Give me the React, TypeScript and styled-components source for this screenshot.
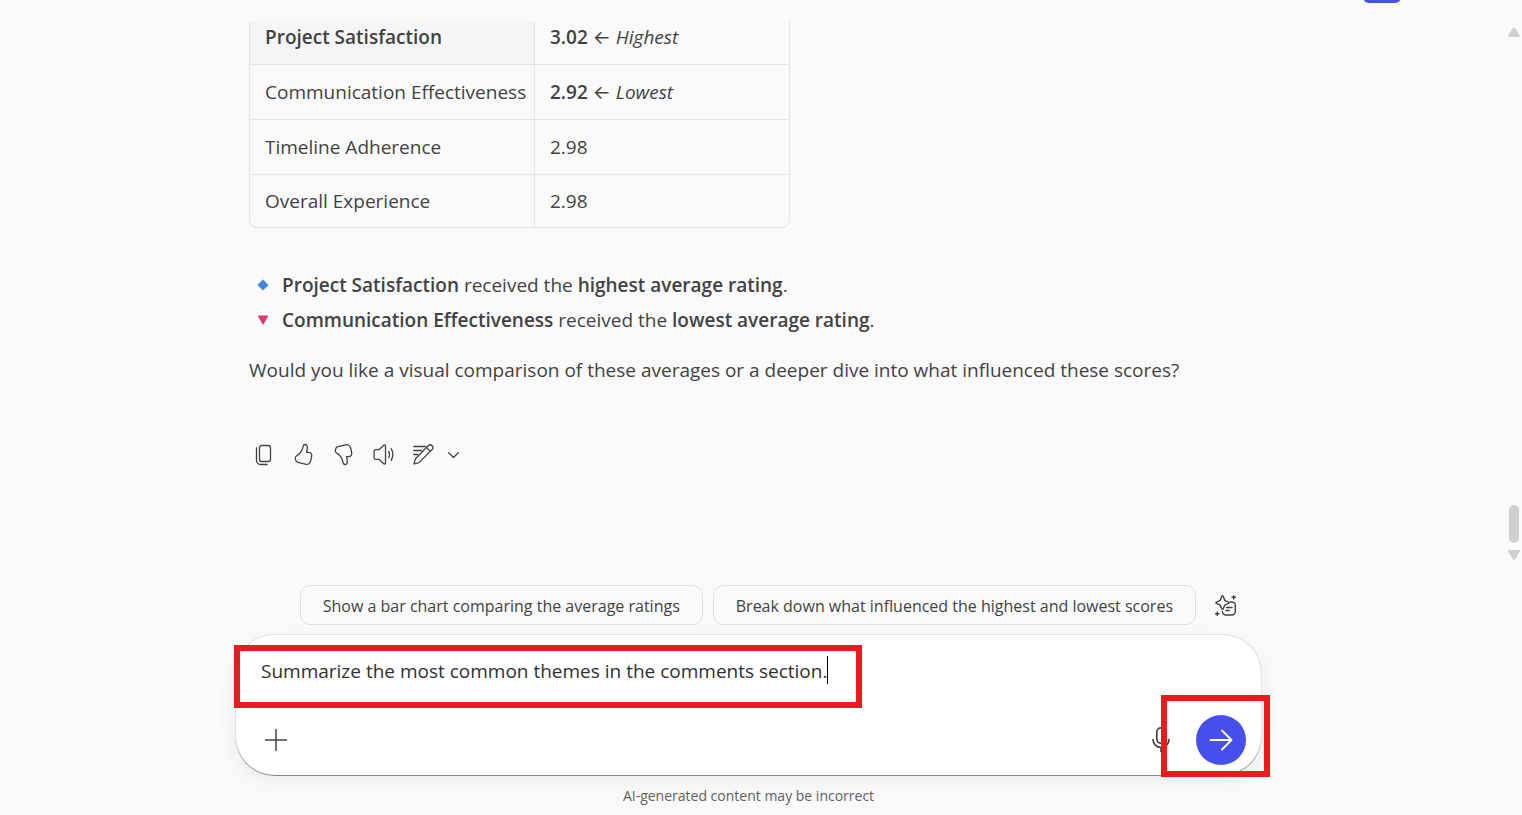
import React, { useState } from "react";
import styled, { createGlobalStyle } from "styled-components";

const GlobalStyle = createGlobalStyle`
  *, *::before, *::after { box-sizing: border-box; }
  body {
    margin: 0;
    background: #fafafa;
    color: #424242;
    font-family: "Segoe UI", "Open Sans", "Noto Sans", sans-serif;
    font-size: 19px;
    line-height: 35px;
  }
  button, input { font: inherit; color: inherit; }
`;

const Page = styled.div`
  display: flex;
  flex-direction: column;
  height: 100vh;
  min-height: 600px;
  overflow: hidden;
`;

const TopBar = styled.header`
  display: flex;
  justify-content: flex-end;
  flex: none;
  height: 21px;
  padding-right: 121px;
  overflow: hidden;
`;

const TopButton = styled.button`
  width: 38px;
  height: 32px;
  margin-top: -29px;
  padding: 0;
  border: 0;
  border-radius: 6px;
  background: #464feb;
`;

const ThreadRow = styled.div`
  display: flex;
  flex: 1;
  min-height: 0;
`;

const Thread = styled.main`
  display: flex;
  flex: 1;
  flex-direction: column;
  justify-content: flex-end;
  align-items: center;
  min-width: 0;
  overflow: hidden;
`;

const Message = styled.article`
  width: 100%;
  max-width: 1027px;
  padding: 0 14px 90px;
`;

const TableFrame = styled.div`
  width: 541px;
  max-width: 100%;
  border: 1px solid #e5e5e5;
  border-radius: 8px;
  overflow: hidden;
`;

const ScoreTable = styled.table`
  width: 100%;
  border-collapse: separate;
  border-spacing: 0;
  table-layout: fixed;

  th, td {
    height: 55px;
    padding: 0 0 0 15px;
    border-bottom: 1px solid #e5e5e5;
    font-weight: 400;
    text-align: left;
    white-space: nowrap;
  }
  th {
    width: 285px;
    border-right: 1px solid #e5e5e5;
  }
  tr:last-child > * {
    height: 52px;
    border-bottom: 0;
  }
`;

const MetricCell = styled.th<{ $lead?: boolean }>`
  && {
    background: ${(p) => (p.$lead ? "#f5f5f5" : "transparent")};
    font-weight: ${(p) => (p.$lead ? 600 : 400)};
  }
`;

const Strong = styled.strong`
  font-weight: 600;
`;

const Arrow = styled.span`
  font-family: Inter, sans-serif;
`;

const Findings = styled.ul`
  margin: 40px 0 15px;
  padding: 0;
  list-style: none;
`;

const Finding = styled.li`
  display: grid;
  grid-template-columns: 28px 1fr;
  column-gap: 5px;
  align-items: center;

  svg { justify-self: center; }
`;

const Paragraph = styled.p`
  margin: 0;
`;

const Actions = styled.div`
  display: flex;
  margin: 47px 0 0 -6px;
`;

const IconButton = styled.button<{ $width?: number }>`
  display: flex;
  flex: none;
  align-items: center;
  justify-content: center;
  width: ${(p) => p.$width ?? 40}px;
  height: 40px;
  padding: 0;
  border: 0;
  background: none;
  cursor: pointer;
`;

const ScrollRail = styled.div`
  display: flex;
  flex: none;
  flex-direction: column;
  align-items: center;
  width: 25px;
  padding: 6px 0 5px 9px;
`;

const ScrollThumb = styled.div`
  width: 10px;
  height: 38px;
  margin: auto 0 7px;
  border-radius: 5px;
  background: #cfcfcf;
`;

const Footer = styled.footer`
  display: flex;
  flex: none;
  flex-direction: column;
  align-items: center;
  padding: 20px 25px 0 0;
`;

const Suggestions = styled.div`
  display: flex;
  justify-content: flex-end;
  gap: 10px;
  width: 100%;
  max-width: 1027px;
  padding-right: 16px;
`;

const Suggestion = styled.button`
  height: 40px;
  padding: 1px 22px 0;
  border: 1px solid #e0e0e0;
  border-radius: 10px;
  background: #fafafa;
  font-size: 16px;
  line-height: 24px;
  white-space: nowrap;
  cursor: pointer;
`;

const Composer = styled.form`
  position: relative;
  width: 100%;
  max-width: 1027px;
  margin-top: 9px;
  padding: 22px 16px 10px 26px;
  border-radius: 40px;
  background: #fff;
  box-shadow:
    inset 0 1px 0 #e3e3e3,
    inset 1px 0 0 #e3e3e3,
    inset -1px 0 0 #e3e3e3,
    0 1px 0 #858585,
    0 6px 20px rgba(40, 60, 90, 0.08);
`;

const PromptRow = styled.div`
  display: flex;
`;

const PromptInput = styled.input`
  field-sizing: content;
  height: 28px;
  padding: 2px 0 0;
  border: 0;
  outline: 0;
  background: none;
  color: #303030;
  line-height: 26px;
`;

const Caret = styled.span`
  width: 1px;
  background: #000;
`;

const Toolbar = styled.div`
  display: flex;
  align-items: center;
  margin: 31px 0 0 -5px;
`;

const SendButton = styled.button`
  display: flex;
  align-items: center;
  justify-content: center;
  width: 50px;
  height: 50px;
  margin-left: 15px;
  padding: 0;
  border: 0;
  border-radius: 50%;
  background: #464feb;
  cursor: pointer;
`;

const Spacer = styled.span`
  flex: 1;
`;

const Highlight = styled.div`
  position: absolute;
  border: 6px solid #e81c1c;
  pointer-events: none;
`;

const PromptHighlight = styled(Highlight)`
  top: 11px;
  left: -1px;
  width: 628px;
  height: 63px;
`;

const SendHighlight = styled(Highlight)`
  right: -8px;
  bottom: -2px;
  width: 109px;
  height: 82px;
`;

const Disclaimer = styled.p`
  margin: 11px 0 9px;
  color: #616161;
  font-size: 14px;
  line-height: 20px;
`;

type IconProps = {
  size?: number;
  stroke?: number;
  color?: string;
  children: React.ReactNode;
};

const Icon = ({ size = 24, stroke = 1.3, color = "#424242", children }: IconProps) => (
  <svg
    width={size}
    height={size}
    viewBox={`0 0 ${size} ${size}`}
    fill="none"
    stroke={color}
    strokeWidth={stroke}
    strokeLinecap="round"
    strokeLinejoin="round"
    aria-hidden="true"
  >
    {children}
  </svg>
);

const thumbPath =
  "M13.6 2c1.5 0 2.3 1.400 2.200 3.200-.1 1.700-.4 3-.8 4.600h2c2.200 0 3.500 1.500 3.200 3.600l-.9 4.800c-.5 2.700-2.800 4.200-5.500 3.500l-7.400-1.900c-1.300-.4-2-1.200-2.300-2.500l-.3-1.400c-.2-1.200.4-2 1.400-2.600 2.700-1.400 4.100-2.900 5.300-5.700.6-1.400.9-2.500 1.200-3.900.2-1.100.8-1.700 1.900-1.700Z";

const scores = [
  { metric: "Project Satisfaction", value: "3.02", note: "Highest" },
  { metric: "Communication Effectiveness", value: "2.92", note: "Lowest" },
  { metric: "Timeline Adherence", value: "2.98" },
  { metric: "Overall Experience", value: "2.98" },
];

const suggestions = [
  "Show a bar chart comparing the average ratings",
  "Break down what influenced the highest and lowest scores",
];

export default function App() {
  const [prompt, setPrompt] = useState(
    "Summarize the most common themes in the comments section."
  );

  return (
    <Page>
      <GlobalStyle />
      <TopBar>
        <TopButton type="button" aria-label="New chat" />
      </TopBar>

      <ThreadRow>
        <Thread>
          <Message>
            <TableFrame>
              <ScoreTable>
                <tbody>
                  {scores.map((row, i) => (
                    <tr key={row.metric}>
                      <MetricCell scope="row" $lead={i === 0}>
                        {row.metric}
                      </MetricCell>
                      <td>
                        {row.note ? (
                          <>
                            <Strong>{row.value}</Strong> <Arrow>←</Arrow> <em>{row.note}</em>
                          </>
                        ) : (
                          row.value
                        )}
                      </td>
                    </tr>
                  ))}
                </tbody>
              </ScoreTable>
            </TableFrame>

            <Findings>
              <Finding>
                <svg width="12" height="14" viewBox="0 0 12 14" aria-hidden="true">
                  <path d="M6 .7 11.300 6 6 11.300.700 6Z" fill="#3f87dc" stroke="#3f87dc" strokeWidth=".5" strokeLinejoin="round" />
                </svg>
                <span>
                  <Strong>Project Satisfaction</Strong> received the{" "}
                  <Strong>highest average rating</Strong>.
                </span>
              </Finding>
              <Finding>
                <svg width="12" height="14" viewBox="0 0 12 14" aria-hidden="true">
                  <path d="M1.300 1.500h9.400q.7 0 .3.700L6.500 10.300q-.5.700-1 0L1 2.200q-.4-.7.300-.7Z" fill="#e0356b" />
                </svg>
                <span>
                  <Strong>Communication Effectiveness</Strong> received the{" "}
                  <Strong>lowest average rating</Strong>.
                </span>
              </Finding>
            </Findings>

            <Paragraph>
              Would you like a visual comparison of these averages or a deeper dive into what
              influenced these scores?
            </Paragraph>

            <Actions>
              <IconButton type="button" aria-label="Copy">
                <Icon>
                  <rect x="8.500" y="2.500" width="11" height="16" rx="2.300" />
                  <path d="M5.500 5v12.500a4 4 0 0 0 4 4h6.600" />
                </Icon>
              </IconButton>
              <IconButton type="button" aria-label="Like">
                <Icon>
                  <path d={thumbPath} transform="translate(.5 -.5)" />
                </Icon>
              </IconButton>
              <IconButton type="button" aria-label="Dislike">
                <Icon>
                  <path d={thumbPath} transform="matrix(1 0 0 -1 .5 23.500)" />
                </Icon>
              </IconButton>
              <IconButton type="button" aria-label="Read aloud">
                <Icon>
                  <g transform="translate(.5 -.5)">
                    <path d="M14 3.600v16.800c0 1-1.100 1.400-1.800.8l-4.700-4.400H4.200c-.9 0-1.600-.7-1.600-1.600V8.800c0-.9.700-1.600 1.600-1.600h3.300l4.700-4.400c.7-.6 1.800-.2 1.800.8Z" />
                    <path d="M17.200 8.700c1.100 2.100 1.100 4.500 0 6.600M19.600 6.200c2.200 3.600 2.200 8 0 11.600" />
                  </g>
                </Icon>
              </IconButton>
              <IconButton type="button" aria-label="Edit in pages">
                <Icon>
                  <g transform="translate(.5 -.5)">
                    <path d="M2.200 4h12M2.200 8h8M2.200 12h4" />
                    <path d="M16.700 3.200c1-1 2.800-1.100 3.900 0s1.100 2.800 0 3.900L8.200 19.400c-.4.400-.9.700-1.500.9l-4.200 1.200 1.100-4.300c.2-.6.500-1.100.9-1.500ZM15 5l3.900 3.900" />
                  </g>
                </Icon>
              </IconButton>
              <IconButton type="button" aria-label="More options" $width={20}>
                <Icon size={12}>
                  <path d="m1.700 3.700 4.800 4.800 4.800-4.800" />
                </Icon>
              </IconButton>
            </Actions>
          </Message>
        </Thread>

        <ScrollRail aria-hidden="true">
          <svg width="12" height="10" viewBox="0 0 12 10">
            <path d="M5 .8q1-1.300 2 0l4.700 7.400q.7 1.800-1 1.800H1.300q-1.700 0-1-1.800Z" fill="#cfcfcf" />
          </svg>
          <ScrollThumb />
          <svg width="12" height="10" viewBox="0 0 12 10">
            <path d="M5 9.200q1 1.300 2 0l4.700-7.400q.7-1.800-1-1.800H1.300q-1.700 0-1 1.800Z" fill="#cfcfcf" />
          </svg>
        </ScrollRail>
      </ThreadRow>

      <Footer>
        <Suggestions>
          {suggestions.map((s) => (
            <Suggestion key={s} type="button" onClick={() => setPrompt(s)}>
              {s}
            </Suggestion>
          ))}
          <IconButton type="button" aria-label="View prompts">
            <Icon stroke={1.4}>
              <path d="M7.800 3.300q.7-1 1.400 0l1.300 3.300q.4.900 1.200 1.300l2.900 1.200q.9.600 0 1.300l-2.900 1.200q-.8.400-1.200 1.300l-1.300 2.900q-.7 1-1.400 0l-1.300-2.900q-.4-.9-1.200-1.300L2.400 10.400q-.9-.7 0-1.300l2.900-1.200q.8-.4 1.200-1.300Z" />
              <path d="M16 9h1.800a3.500 3.500 0 0 1 3.500 3.500v6a3.500 3.500 0 0 1-3.500 3.500h-6A3.500 3.500 0 0 1 8.300 18.500M12.500 14.500h5.500M12 17.500h3.300" />
              <path d="M19.700 2.600v3.400M18 4.300h3.400M3.300 19v3.400M1.600 20.700h3.400" />
            </Icon>
          </IconButton>
        </Suggestions>

        <Composer onSubmit={(e) => e.preventDefault()}>
          <PromptRow>
            <PromptInput
              aria-label="Message Copilot"
              value={prompt}
              onChange={(e) => setPrompt(e.target.value)}
            />
            <Caret aria-hidden="true" />
          </PromptRow>
          <Toolbar>
            <IconButton type="button" aria-label="Add content">
              <Icon size={24} stroke={1.500}>
                <path d="M12 1.500v21M1.500 12h21" />
              </Icon>
            </IconButton>
            <Spacer />
            <IconButton type="button" aria-label="Use microphone">
              <Icon size={28} stroke={1.700}>
                <rect x="9.800" y="1.800" width="8.400" height="15.500" rx="4.200" />
                <path d="M6 13.500a8 8 0 0 0 16 0M14 21.500v4" />
              </Icon>
            </IconButton>
            <SendButton type="submit" aria-label="Send">
              <Icon size={24} stroke={1.800} color="#fff">
                <path d="M1.500 12h21M13 2.500l9.500 9.500-9.500 9.500" />
              </Icon>
            </SendButton>
          </Toolbar>
          <PromptHighlight />
          <SendHighlight />
        </Composer>

        <Disclaimer>AI-generated content may be incorrect</Disclaimer>
      </Footer>
    </Page>
  );
}
